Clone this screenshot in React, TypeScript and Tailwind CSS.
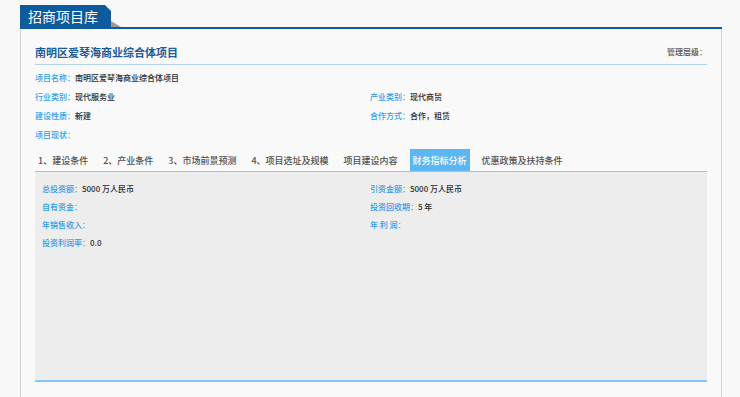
const label = "text-[#2f9de9]";

const tabs = [
  "1、建设条件",
  "2、产业条件",
  "3、市场前景预测",
  "4、项目选址及规模",
  "项目建设内容",
  "财务指标分析",
  "优惠政策及扶持条件",
];

function Field({ name, value }: { name: string; value?: string }) {
  return (
    <div className="flex h-[19px] items-center whitespace-nowrap">
      <span className={label}>{name}：</span>
      <span>{value}</span>
    </div>
  );
}

function Stat({ name, value }: { name: string; value?: string }) {
  return (
    <div className="flex h-[18px] items-center whitespace-nowrap">
      <span className={label}>{name}：</span>
      <span>{value}</span>
    </div>
  );
}

export default function App() {
  return (
    <div className="min-h-[397px] bg-[#f8f8f8] font-['Noto_Sans_CJK_SC','Microsoft_YaHei',sans-serif] text-[8px] font-medium leading-none text-[#2b2b2b]">
      <div className="w-[722px] pl-[20px] pt-[5px]">
        {/* header tab */}
        <div className="flex h-[22px] items-end">
          <div className="h-[22px] w-[91px] bg-[#0d5b9c] pl-[8px] text-[14px] font-normal leading-[22px] text-white [clip-path:polygon(0_0,85px_0,91px_6px,91px_100%,0_100%)]">
            招商项目库
          </div>
          <svg width="10" height="6" viewBox="0 0 10 6">
            <polygon points="0,0 10,6 0,6" fill="#9b9b9b" />
          </svg>
        </div>
        <div className="h-[2px] bg-[#0d5b9c]" />

        <div className="min-h-[370px] border-x border-[#d2d2d2] bg-[#f9f9f9] px-[14px]">
          {/* title */}
          <div className="flex items-center justify-between border-b border-[#b3d4f0] pb-[5px] pt-[16px]">
            <h1 className="text-[11px] font-bold leading-[14px] text-[#1d5b9a]">
              南明区爱琴海商业综合体项目
            </h1>
            <span className="text-[8px] text-[#555]">管理层级：</span>
          </div>

          {/* base info */}
          <div className="mt-[3px] grid grid-cols-[335px_1fr]">
            <div className="col-span-2">
              <Field name="项目名称" value="南明区爱琴海商业综合体项目" />
            </div>
            <Field name="行业类别" value="现代服务业" />
            <Field name="产业类别" value="现代商贸" />
            <Field name="建设性质" value="新建" />
            <Field name="合作方式" value="合作，租赁" />
            <div className="col-span-2">
              <Field name="项目现状" />
            </div>
          </div>

          {/* tabs */}
          <div className="mt-[5px] flex gap-[9px] border-b border-[#8fc9f1] text-[9px] text-[#505050]">
            {tabs.map((t) => (
              <div
                key={t}
                className={
                  t === "财务指标分析"
                    ? "flex h-[22px] items-center bg-[#5bb6f2] px-[3px] text-white"
                    : "flex h-[22px] items-center px-[3px]"
                }
              >
                {t}
              </div>
            ))}
          </div>

          {/* panel */}
          <div className="h-[210px] border-b-2 border-[#86c8f5] bg-[#ededed] pl-[7px] pt-[8px]">
            <div className="grid grid-cols-[328px_1fr]">
              <Stat name="总投资额" value="5000 万人民币" />
              <Stat name="引资金额" value="5000 万人民币" />
              <Stat name="自有资金" />
              <Stat name="投资回收期" value="5 年" />
              <Stat name="年销售收入" />
              <Stat name="年 利 润" />
              <Stat name="投资利润率" value="0.0" />
            </div>
          </div>
        </div>
      </div>
    </div>
  );
}
